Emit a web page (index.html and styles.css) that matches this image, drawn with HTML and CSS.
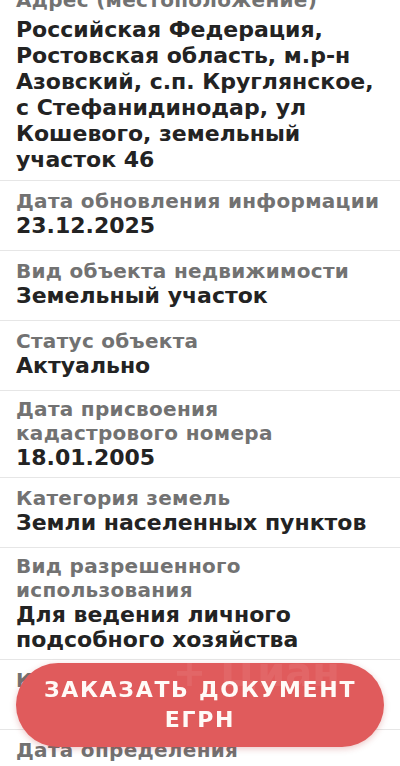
FILE: index.html
```html
<!DOCTYPE html>
<html lang="ru">
<head>
    <meta charset="UTF-8">
    <meta name="viewport" content="width=device-width, initial-scale=1.0">
    <title>Сведения об объекте</title>
    <link rel="stylesheet" href="styles.css">
</head>
<body>
    <div class="info-list">
        <div class="info-row row-address">
            <div class="label">Адрес (местоположение)</div>
            <div class="value">Российская Федерация, Ростовская область, м.р-н Азовский, с.п. Круглянское, с Стефанидинодар, ул Кошевого, земельный участок 46</div>
        </div>
        <div class="info-row">
            <div class="label">Дата обновления информации</div>
            <div class="value">23.12.2025</div>
        </div>
        <div class="info-row">
            <div class="label">Вид объекта недвижимости</div>
            <div class="value">Земельный участок</div>
        </div>
        <div class="info-row">
            <div class="label">Статус объекта</div>
            <div class="value">Актуально</div>
        </div>
        <div class="info-row row-multi">
            <div class="label">Дата присвоения<br>кадастрового номера</div>
            <div class="value">18.01.2005</div>
        </div>
        <div class="info-row">
            <div class="label">Категория земель</div>
            <div class="value">Земли населенных пунктов</div>
        </div>
        <div class="info-row row-multi">
            <div class="label">Вид разрешенного<br>использования</div>
            <div class="value">Для ведения личного<br>подсобного хозяйства</div>
        </div>
        <div class="info-row">
            <div class="label">Кадастровая стоимость</div>
            <div class="value">1 176 370 ₽</div>
        </div>
        <div class="info-row">
            <div class="label">Дата определения<br>кадастровой стоимости</div>
            <div class="value">01.01.2022</div>
        </div>
    </div>

    <a href="#" class="order-btn">
        <span class="watermark">+ Циан</span>
        <span class="order-text">Заказать документ<br>ЕГРН</span>
    </a>
</body>
</html>
```

FILE: styles.css
```css
body {
    margin: 0;
    padding: 0;
    background: #fff;
    font-family: 'DejaVu Sans', 'Noto Sans', sans-serif;
    font-weight: bold;
    overflow: hidden;
}

.info-list {
    margin-top: -20px;
}

.info-row {
    padding: 8px 16px 12px;
    border-bottom: 1px solid #e6e6e6;
}

.row-multi {
    padding: 6px 16px 7px;
}

.label {
    font-size: 20px;
    line-height: 24px;
    letter-spacing: 0.3px;
    color: #727272;
}

.value {
    font-size: 22px;
    line-height: 25px;
    color: #232323;
}

.row-address {
    padding-bottom: 7px;
}

.row-address .label {
    margin-bottom: 5px;
}

.row-address .value {
    line-height: 26px;
}

.order-btn {
    position: fixed;
    left: 16px;
    right: 16px;
    bottom: 19px;
    height: 84px;
    border-radius: 42px;
    background: #e05b5c;
    box-shadow: 0 2px 6px rgba(180, 40, 40, 0.25);
    display: flex;
    align-items: center;
    justify-content: center;
    text-decoration: none;
    overflow: hidden;
}

.order-text {
    position: relative;
    color: #fffaf7;
    font-size: 22px;
    line-height: 30px;
    letter-spacing: 1.7px;
    text-align: center;
    text-transform: uppercase;
}

.watermark {
    position: absolute;
    top: -14px;
    right: 44px;
    font-size: 40px;
    color: rgba(255, 255, 255, 0.07);
}
```
